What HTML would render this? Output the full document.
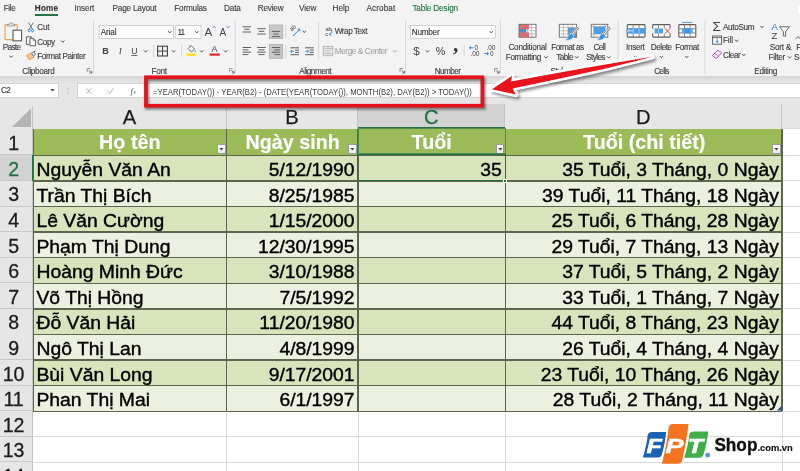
<!DOCTYPE html>
<html lang="vi"><head><meta charset="utf-8"><title>Excel</title>
<style>
html,body{margin:0;padding:0;width:800px;height:471px;overflow:hidden;background:#fff;font-family:"Liberation Sans", sans-serif;}
.abs{position:absolute;}
.t{position:absolute;white-space:nowrap;line-height:12px;}
.cell{position:absolute;white-space:nowrap;overflow:hidden;box-sizing:border-box;}
#root{position:relative;width:800px;height:471px;overflow:hidden;will-change:transform;}
</style></head><body><div id="root">
<!-- ribbon -->
<div class="abs" style="left:0;top:0;width:800px;height:76px;background:#f3f3f3"></div>
<div class="abs" style="left:0;top:75.6px;width:800px;height:8.2px;background:linear-gradient(#d4d4d4,#e2e2e2 55%,#e6e6e6)"></div>
<div class="abs" style="left:0;top:83.6px;width:800px;height:20px;background:#e6e6e6"></div>
<!-- formula bar -->
<div class="abs" style="left:-1px;top:83.1px;width:59.6px;height:14.9px;background:#fff;border:0.7px solid #d4d4d4;box-sizing:border-box"></div>
<div class="abs" style="left:76.8px;top:83.1px;width:725px;height:15.0px;background:#fff;border:0.7px solid #d4d4d4;box-sizing:border-box"></div>
<div class="abs" style="left:0;top:103.5px;width:800px;height:25.3px;background:#e6e6e6"></div>
<!-- home underline -->
<div class="abs" style="left:35.4px;top:14.2px;width:22.6px;height:1.6px;background:#217346"></div>
<div class="abs" style="left:33.2px;top:128.50px;width:748.80px;height:26.85px;background:#9bbb59"></div>
<div class="abs" style="left:33.2px;top:155.35px;width:748.80px;height:25.69px;background:#d8e4bc"></div>
<div class="abs" style="left:33.2px;top:180.94px;width:748.80px;height:25.69px;background:#ebf1de"></div>
<div class="abs" style="left:33.2px;top:206.53px;width:748.80px;height:25.69px;background:#d8e4bc"></div>
<div class="abs" style="left:33.2px;top:232.12px;width:748.80px;height:25.69px;background:#ebf1de"></div>
<div class="abs" style="left:33.2px;top:257.71px;width:748.80px;height:25.69px;background:#d8e4bc"></div>
<div class="abs" style="left:33.2px;top:283.30px;width:748.80px;height:25.69px;background:#ebf1de"></div>
<div class="abs" style="left:33.2px;top:308.89px;width:748.80px;height:25.69px;background:#d8e4bc"></div>
<div class="abs" style="left:33.2px;top:334.48px;width:748.80px;height:25.69px;background:#ebf1de"></div>
<div class="abs" style="left:33.2px;top:360.07px;width:748.80px;height:25.69px;background:#d8e4bc"></div>
<div class="abs" style="left:33.2px;top:385.66px;width:748.80px;height:25.69px;background:#ebf1de"></div>
<div class="abs" style="left:33.2px;top:128.00px;width:766.8px;height:1px;background:#d9d9d9"></div>
<div class="abs" style="left:33.2px;top:154.85px;width:766.8px;height:1px;background:#d9d9d9"></div>
<div class="abs" style="left:33.2px;top:180.44px;width:766.8px;height:1px;background:#d9d9d9"></div>
<div class="abs" style="left:33.2px;top:206.03px;width:766.8px;height:1px;background:#d9d9d9"></div>
<div class="abs" style="left:33.2px;top:231.62px;width:766.8px;height:1px;background:#d9d9d9"></div>
<div class="abs" style="left:33.2px;top:257.21px;width:766.8px;height:1px;background:#d9d9d9"></div>
<div class="abs" style="left:33.2px;top:282.80px;width:766.8px;height:1px;background:#d9d9d9"></div>
<div class="abs" style="left:33.2px;top:308.39px;width:766.8px;height:1px;background:#d9d9d9"></div>
<div class="abs" style="left:33.2px;top:333.98px;width:766.8px;height:1px;background:#d9d9d9"></div>
<div class="abs" style="left:33.2px;top:359.57px;width:766.8px;height:1px;background:#d9d9d9"></div>
<div class="abs" style="left:33.2px;top:385.16px;width:766.8px;height:1px;background:#d9d9d9"></div>
<div class="abs" style="left:33.2px;top:410.75px;width:766.8px;height:1px;background:#d9d9d9"></div>
<div class="abs" style="left:33.2px;top:436.34px;width:766.8px;height:1px;background:#d9d9d9"></div>
<div class="abs" style="left:33.2px;top:461.93px;width:766.8px;height:1px;background:#d9d9d9"></div>
<div class="abs" style="left:33.2px;top:487.52px;width:766.8px;height:1px;background:#d9d9d9"></div>
<div class="abs" style="left:226.30px;top:128.50px;width:1px;height:342.50px;background:#d9d9d9"></div>
<div class="abs" style="left:357.60px;top:128.50px;width:1px;height:342.50px;background:#d9d9d9"></div>
<div class="abs" style="left:505.00px;top:128.50px;width:1px;height:342.50px;background:#d9d9d9"></div>
<div class="abs" style="left:781.50px;top:128.50px;width:1px;height:342.50px;background:#d9d9d9"></div>
<div class="abs" style="left:33.2px;top:127.80px;width:748.80px;height:1.4px;background:#5f644f"></div>
<div class="abs" style="left:33.2px;top:154.65px;width:748.80px;height:1.4px;background:#5f644f"></div>
<div class="abs" style="left:33.2px;top:180.24px;width:748.80px;height:1.4px;background:#5f644f"></div>
<div class="abs" style="left:33.2px;top:205.83px;width:748.80px;height:1.4px;background:#5f644f"></div>
<div class="abs" style="left:33.2px;top:231.42px;width:748.80px;height:1.4px;background:#5f644f"></div>
<div class="abs" style="left:33.2px;top:257.01px;width:748.80px;height:1.4px;background:#5f644f"></div>
<div class="abs" style="left:33.2px;top:282.60px;width:748.80px;height:1.4px;background:#5f644f"></div>
<div class="abs" style="left:33.2px;top:308.19px;width:748.80px;height:1.4px;background:#5f644f"></div>
<div class="abs" style="left:33.2px;top:333.78px;width:748.80px;height:1.4px;background:#5f644f"></div>
<div class="abs" style="left:33.2px;top:359.37px;width:748.80px;height:1.4px;background:#5f644f"></div>
<div class="abs" style="left:33.2px;top:384.96px;width:748.80px;height:1.4px;background:#5f644f"></div>
<div class="abs" style="left:33.2px;top:410.55px;width:748.80px;height:1.4px;background:#5f644f"></div>
<div class="abs" style="left:32.50px;top:128.50px;width:1.4px;height:282.75px;background:#5f644f"></div>
<div class="abs" style="left:226.10px;top:128.50px;width:1.4px;height:282.75px;background:#5f644f"></div>
<div class="abs" style="left:357.40px;top:128.50px;width:1.4px;height:282.75px;background:#5f644f"></div>
<div class="abs" style="left:504.80px;top:128.50px;width:1.4px;height:282.75px;background:#5f644f"></div>
<div class="abs" style="left:781.30px;top:128.50px;width:1.4px;height:282.75px;background:#5f644f"></div>
<div class="cell" style="left:33.2px;top:128.50px;width:193.60px;height:26.85px;line-height:28.05px;text-align:center;color:#fff;font-weight:700;font-size:19.299999999999997px;-webkit-text-stroke:0.15px;transform:scaleX(1.023);transform-origin:50% 50%">Họ tên</div>
<div class="abs" style="left:216.80px;top:144.45px;width:8.8px;height:9.6px;background:linear-gradient(#fff,#e8e8e8);border:0.7px solid #9a9a9a;box-sizing:border-box"></div>
<svg class="abs" style="left:216.80px;top:144.45px" width="8.8" height="9.6" viewBox="0 0 8.8 9.6"><path d="M2.3 4 L6.5 4 L4.4 6.5 Z" fill="#444"/></svg>
<div class="cell" style="left:226.8px;top:128.50px;width:131.30px;height:26.85px;line-height:28.05px;text-align:center;color:#fff;font-weight:700;font-size:19.299999999999997px;-webkit-text-stroke:0.15px;transform:scaleX(1.023);transform-origin:50% 50%">Ngày sinh</div>
<div class="abs" style="left:348.10px;top:144.45px;width:8.8px;height:9.6px;background:linear-gradient(#fff,#e8e8e8);border:0.7px solid #9a9a9a;box-sizing:border-box"></div>
<svg class="abs" style="left:348.10px;top:144.45px" width="8.8" height="9.6" viewBox="0 0 8.8 9.6"><path d="M2.3 4 L6.5 4 L4.4 6.5 Z" fill="#444"/></svg>
<div class="cell" style="left:358.1px;top:128.50px;width:147.40px;height:26.85px;line-height:28.05px;text-align:center;color:#fff;font-weight:700;font-size:19.299999999999997px;-webkit-text-stroke:0.15px;transform:scaleX(1.023);transform-origin:50% 50%">Tuổi</div>
<div class="abs" style="left:495.50px;top:144.45px;width:8.8px;height:9.6px;background:linear-gradient(#fff,#e8e8e8);border:0.7px solid #9a9a9a;box-sizing:border-box"></div>
<svg class="abs" style="left:495.50px;top:144.45px" width="8.8" height="9.6" viewBox="0 0 8.8 9.6"><path d="M2.3 4 L6.5 4 L4.4 6.5 Z" fill="#444"/></svg>
<div class="cell" style="left:505.5px;top:128.50px;width:276.50px;height:26.85px;line-height:28.05px;text-align:center;color:#fff;font-weight:700;font-size:19.299999999999997px;-webkit-text-stroke:0.15px;transform:scaleX(1.023);transform-origin:50% 50%">Tuổi (chi tiết)</div>
<div class="abs" style="left:772.00px;top:144.45px;width:8.8px;height:9.6px;background:linear-gradient(#fff,#e8e8e8);border:0.7px solid #9a9a9a;box-sizing:border-box"></div>
<svg class="abs" style="left:772.00px;top:144.45px" width="8.8" height="9.6" viewBox="0 0 8.8 9.6"><path d="M2.3 4 L6.5 4 L4.4 6.5 Z" fill="#444"/></svg>
<div class="cell" style="left:33.2px;top:155px;width:193.60px;height:29px;line-height:29px;text-align:left;padding-left:3.4px;font-size:18.9px;color:#000;-webkit-text-stroke:0.4px;transform:scaleX(1.023);transform-origin:0 50%">Nguyễn Văn An</div>
<div class="cell" style="left:226.8px;top:155px;width:131.30px;height:29px;line-height:29px;text-align:right;padding-right:3.6px;font-size:18.9px;color:#000;-webkit-text-stroke:0.4px;transform:scaleX(1.023);transform-origin:100% 50%">5/12/1990</div>
<div class="cell" style="left:358.1px;top:155px;width:147.40px;height:29px;line-height:29px;text-align:right;padding-right:3.6px;font-size:18.9px;color:#000;-webkit-text-stroke:0.4px;transform:scaleX(1.023);transform-origin:100% 50%">35</div>
<div class="cell" style="left:505.5px;top:155px;width:276.50px;height:29px;line-height:29px;text-align:right;padding-right:3.6px;font-size:18.9px;color:#000;-webkit-text-stroke:0.4px;transform:scaleX(1.023);transform-origin:100% 50%">35 Tuổi, 3 Tháng, 0 Ngày</div>
<div class="cell" style="left:33.2px;top:181px;width:193.60px;height:29px;line-height:29px;text-align:left;padding-left:3.4px;font-size:18.9px;color:#000;-webkit-text-stroke:0.4px;transform:scaleX(1.023);transform-origin:0 50%">Trần Thị Bích</div>
<div class="cell" style="left:226.8px;top:181px;width:131.30px;height:29px;line-height:29px;text-align:right;padding-right:3.6px;font-size:18.9px;color:#000;-webkit-text-stroke:0.4px;transform:scaleX(1.023);transform-origin:100% 50%">8/25/1985</div>
<div class="cell" style="left:505.5px;top:181px;width:276.50px;height:29px;line-height:29px;text-align:right;padding-right:3.6px;font-size:18.9px;color:#000;-webkit-text-stroke:0.4px;transform:scaleX(1.023);transform-origin:100% 50%">39 Tuổi, 11 Tháng, 18 Ngày</div>
<div class="cell" style="left:33.2px;top:206px;width:193.60px;height:29px;line-height:29px;text-align:left;padding-left:3.4px;font-size:18.9px;color:#000;-webkit-text-stroke:0.4px;transform:scaleX(1.023);transform-origin:0 50%">Lê Văn Cường</div>
<div class="cell" style="left:226.8px;top:206px;width:131.30px;height:29px;line-height:29px;text-align:right;padding-right:3.6px;font-size:18.9px;color:#000;-webkit-text-stroke:0.4px;transform:scaleX(1.023);transform-origin:100% 50%">1/15/2000</div>
<div class="cell" style="left:505.5px;top:206px;width:276.50px;height:29px;line-height:29px;text-align:right;padding-right:3.6px;font-size:18.9px;color:#000;-webkit-text-stroke:0.4px;transform:scaleX(1.023);transform-origin:100% 50%">25 Tuổi, 6 Tháng, 28 Ngày</div>
<div class="cell" style="left:33.2px;top:232px;width:193.60px;height:29px;line-height:29px;text-align:left;padding-left:3.4px;font-size:18.9px;color:#000;-webkit-text-stroke:0.4px;transform:scaleX(1.023);transform-origin:0 50%">Phạm Thị Dung</div>
<div class="cell" style="left:226.8px;top:232px;width:131.30px;height:29px;line-height:29px;text-align:right;padding-right:3.6px;font-size:18.9px;color:#000;-webkit-text-stroke:0.4px;transform:scaleX(1.023);transform-origin:100% 50%">12/30/1995</div>
<div class="cell" style="left:505.5px;top:232px;width:276.50px;height:29px;line-height:29px;text-align:right;padding-right:3.6px;font-size:18.9px;color:#000;-webkit-text-stroke:0.4px;transform:scaleX(1.023);transform-origin:100% 50%">29 Tuổi, 7 Tháng, 13 Ngày</div>
<div class="cell" style="left:33.2px;top:257px;width:193.60px;height:29px;line-height:29px;text-align:left;padding-left:3.4px;font-size:18.9px;color:#000;-webkit-text-stroke:0.4px;transform:scaleX(1.023);transform-origin:0 50%">Hoàng Minh Đức</div>
<div class="cell" style="left:226.8px;top:257px;width:131.30px;height:29px;line-height:29px;text-align:right;padding-right:3.6px;font-size:18.9px;color:#000;-webkit-text-stroke:0.4px;transform:scaleX(1.023);transform-origin:100% 50%">3/10/1988</div>
<div class="cell" style="left:505.5px;top:257px;width:276.50px;height:29px;line-height:29px;text-align:right;padding-right:3.6px;font-size:18.9px;color:#000;-webkit-text-stroke:0.4px;transform:scaleX(1.023);transform-origin:100% 50%">37 Tuổi, 5 Tháng, 2 Ngày</div>
<div class="cell" style="left:33.2px;top:283px;width:193.60px;height:29px;line-height:29px;text-align:left;padding-left:3.4px;font-size:18.9px;color:#000;-webkit-text-stroke:0.4px;transform:scaleX(1.023);transform-origin:0 50%">Võ Thị Hồng</div>
<div class="cell" style="left:226.8px;top:283px;width:131.30px;height:29px;line-height:29px;text-align:right;padding-right:3.6px;font-size:18.9px;color:#000;-webkit-text-stroke:0.4px;transform:scaleX(1.023);transform-origin:100% 50%">7/5/1992</div>
<div class="cell" style="left:505.5px;top:283px;width:276.50px;height:29px;line-height:29px;text-align:right;padding-right:3.6px;font-size:18.9px;color:#000;-webkit-text-stroke:0.4px;transform:scaleX(1.023);transform-origin:100% 50%">33 Tuổi, 1 Tháng, 7 Ngày</div>
<div class="cell" style="left:33.2px;top:308px;width:193.60px;height:29px;line-height:29px;text-align:left;padding-left:3.4px;font-size:18.9px;color:#000;-webkit-text-stroke:0.4px;transform:scaleX(1.023);transform-origin:0 50%">Đỗ Văn Hải</div>
<div class="cell" style="left:226.8px;top:308px;width:131.30px;height:29px;line-height:29px;text-align:right;padding-right:3.6px;font-size:18.9px;color:#000;-webkit-text-stroke:0.4px;transform:scaleX(1.023);transform-origin:100% 50%">11/20/1980</div>
<div class="cell" style="left:505.5px;top:308px;width:276.50px;height:29px;line-height:29px;text-align:right;padding-right:3.6px;font-size:18.9px;color:#000;-webkit-text-stroke:0.4px;transform:scaleX(1.023);transform-origin:100% 50%">44 Tuổi, 8 Tháng, 23 Ngày</div>
<div class="cell" style="left:33.2px;top:334px;width:193.60px;height:29px;line-height:29px;text-align:left;padding-left:3.4px;font-size:18.9px;color:#000;-webkit-text-stroke:0.4px;transform:scaleX(1.023);transform-origin:0 50%">Ngô Thị Lan</div>
<div class="cell" style="left:226.8px;top:334px;width:131.30px;height:29px;line-height:29px;text-align:right;padding-right:3.6px;font-size:18.9px;color:#000;-webkit-text-stroke:0.4px;transform:scaleX(1.023);transform-origin:100% 50%">4/8/1999</div>
<div class="cell" style="left:505.5px;top:334px;width:276.50px;height:29px;line-height:29px;text-align:right;padding-right:3.6px;font-size:18.9px;color:#000;-webkit-text-stroke:0.4px;transform:scaleX(1.023);transform-origin:100% 50%">26 Tuổi, 4 Tháng, 4 Ngày</div>
<div class="cell" style="left:33.2px;top:360px;width:193.60px;height:29px;line-height:29px;text-align:left;padding-left:3.4px;font-size:18.9px;color:#000;-webkit-text-stroke:0.4px;transform:scaleX(1.023);transform-origin:0 50%">Bùi Văn Long</div>
<div class="cell" style="left:226.8px;top:360px;width:131.30px;height:29px;line-height:29px;text-align:right;padding-right:3.6px;font-size:18.9px;color:#000;-webkit-text-stroke:0.4px;transform:scaleX(1.023);transform-origin:100% 50%">9/17/2001</div>
<div class="cell" style="left:505.5px;top:360px;width:276.50px;height:29px;line-height:29px;text-align:right;padding-right:3.6px;font-size:18.9px;color:#000;-webkit-text-stroke:0.4px;transform:scaleX(1.023);transform-origin:100% 50%">23 Tuổi, 10 Tháng, 26 Ngày</div>
<div class="cell" style="left:33.2px;top:385px;width:193.60px;height:29px;line-height:29px;text-align:left;padding-left:3.4px;font-size:18.9px;color:#000;-webkit-text-stroke:0.4px;transform:scaleX(1.023);transform-origin:0 50%">Phan Thị Mai</div>
<div class="cell" style="left:226.8px;top:385px;width:131.30px;height:29px;line-height:29px;text-align:right;padding-right:3.6px;font-size:18.9px;color:#000;-webkit-text-stroke:0.4px;transform:scaleX(1.023);transform-origin:100% 50%">6/1/1997</div>
<div class="cell" style="left:505.5px;top:385px;width:276.50px;height:29px;line-height:29px;text-align:right;padding-right:3.6px;font-size:18.9px;color:#000;-webkit-text-stroke:0.4px;transform:scaleX(1.023);transform-origin:100% 50%">28 Tuổi, 2 Tháng, 11 Ngày</div>
<div class="abs" style="left:0;top:128.50px;width:33.2px;height:26.90px;background:#e6e6e6;border-bottom:1px solid #c9c9c9;box-sizing:border-box"></div>
<div class="cell" style="left:0;top:128px;width:27.200000000000003px;height:29px;line-height:29px;text-align:center;color:#1c1c1c;font-size:20.6px;-webkit-text-stroke:0.3px;transform:scaleX(0.95)">1</div>
<div class="abs" style="left:0;top:155.35px;width:33.2px;height:25.64px;background:#d2d2d2;border-bottom:1px solid #c9c9c9;box-sizing:border-box"></div>
<div class="cell" style="left:0;top:154px;width:27.200000000000003px;height:29px;line-height:29px;text-align:center;color:#217346;font-size:20.6px;-webkit-text-stroke:0.3px;transform:scaleX(0.95)">2</div>
<div class="abs" style="left:0;top:180.94px;width:33.2px;height:25.64px;background:#e6e6e6;border-bottom:1px solid #c9c9c9;box-sizing:border-box"></div>
<div class="cell" style="left:0;top:179px;width:27.200000000000003px;height:29px;line-height:29px;text-align:center;color:#1c1c1c;font-size:20.6px;-webkit-text-stroke:0.3px;transform:scaleX(0.95)">3</div>
<div class="abs" style="left:0;top:206.53px;width:33.2px;height:25.64px;background:#e6e6e6;border-bottom:1px solid #c9c9c9;box-sizing:border-box"></div>
<div class="cell" style="left:0;top:205px;width:27.200000000000003px;height:29px;line-height:29px;text-align:center;color:#1c1c1c;font-size:20.6px;-webkit-text-stroke:0.3px;transform:scaleX(0.95)">4</div>
<div class="abs" style="left:0;top:232.12px;width:33.2px;height:25.64px;background:#e6e6e6;border-bottom:1px solid #c9c9c9;box-sizing:border-box"></div>
<div class="cell" style="left:0;top:231px;width:27.200000000000003px;height:29px;line-height:29px;text-align:center;color:#1c1c1c;font-size:20.6px;-webkit-text-stroke:0.3px;transform:scaleX(0.95)">5</div>
<div class="abs" style="left:0;top:257.71px;width:33.2px;height:25.64px;background:#e6e6e6;border-bottom:1px solid #c9c9c9;box-sizing:border-box"></div>
<div class="cell" style="left:0;top:256px;width:27.200000000000003px;height:29px;line-height:29px;text-align:center;color:#1c1c1c;font-size:20.6px;-webkit-text-stroke:0.3px;transform:scaleX(0.95)">6</div>
<div class="abs" style="left:0;top:283.30px;width:33.2px;height:25.64px;background:#e6e6e6;border-bottom:1px solid #c9c9c9;box-sizing:border-box"></div>
<div class="cell" style="left:0;top:282px;width:27.200000000000003px;height:29px;line-height:29px;text-align:center;color:#1c1c1c;font-size:20.6px;-webkit-text-stroke:0.3px;transform:scaleX(0.95)">7</div>
<div class="abs" style="left:0;top:308.89px;width:33.2px;height:25.64px;background:#e6e6e6;border-bottom:1px solid #c9c9c9;box-sizing:border-box"></div>
<div class="cell" style="left:0;top:307px;width:27.200000000000003px;height:29px;line-height:29px;text-align:center;color:#1c1c1c;font-size:20.6px;-webkit-text-stroke:0.3px;transform:scaleX(0.95)">8</div>
<div class="abs" style="left:0;top:334.48px;width:33.2px;height:25.64px;background:#e6e6e6;border-bottom:1px solid #c9c9c9;box-sizing:border-box"></div>
<div class="cell" style="left:0;top:333px;width:27.200000000000003px;height:29px;line-height:29px;text-align:center;color:#1c1c1c;font-size:20.6px;-webkit-text-stroke:0.3px;transform:scaleX(0.95)">9</div>
<div class="abs" style="left:0;top:360.07px;width:33.2px;height:25.64px;background:#e6e6e6;border-bottom:1px solid #c9c9c9;box-sizing:border-box"></div>
<div class="cell" style="left:0;top:359px;width:27.200000000000003px;height:29px;line-height:29px;text-align:center;color:#1c1c1c;font-size:20.6px;-webkit-text-stroke:0.3px;transform:scaleX(0.95)">10</div>
<div class="abs" style="left:0;top:385.66px;width:33.2px;height:25.64px;background:#e6e6e6;border-bottom:1px solid #c9c9c9;box-sizing:border-box"></div>
<div class="cell" style="left:0;top:384px;width:27.200000000000003px;height:29px;line-height:29px;text-align:center;color:#1c1c1c;font-size:20.6px;-webkit-text-stroke:0.3px;transform:scaleX(0.95)">11</div>
<div class="abs" style="left:0;top:411.25px;width:33.2px;height:25.64px;background:#e6e6e6;border-bottom:1px solid #c9c9c9;box-sizing:border-box"></div>
<div class="cell" style="left:0;top:410px;width:27.200000000000003px;height:29px;line-height:29px;text-align:center;color:#1c1c1c;font-size:20.6px;-webkit-text-stroke:0.3px;transform:scaleX(0.95)">12</div>
<div class="abs" style="left:0;top:436.84px;width:33.2px;height:25.64px;background:#e6e6e6;border-bottom:1px solid #c9c9c9;box-sizing:border-box"></div>
<div class="cell" style="left:0;top:435px;width:27.200000000000003px;height:29px;line-height:29px;text-align:center;color:#1c1c1c;font-size:20.6px;-webkit-text-stroke:0.3px;transform:scaleX(0.95)">13</div>
<div class="abs" style="left:0;top:462.43px;width:33.2px;height:25.64px;background:#e6e6e6;border-bottom:1px solid #c9c9c9;box-sizing:border-box"></div>
<div class="cell" style="left:0;top:461px;width:27.200000000000003px;height:29px;line-height:29px;text-align:center;color:#1c1c1c;font-size:20.6px;-webkit-text-stroke:0.3px;transform:scaleX(0.95)">14</div>
<div class="abs" style="left:32.2px;top:128.50px;width:1px;height:342.50px;background:#c4c4c4"></div>
<div class="abs" style="left:31.700000000000003px;top:155.35px;width:1.5px;height:25.59px;background:#217346"></div>
<div class="cell" style="left:33.2px;top:103.5px;width:193.60px;height:25.00px;line-height:27.00px;text-align:center;background:#e6e6e6;color:#1c1c1c;font-size:20.2px;-webkit-text-stroke:0.25px;border-right:1px solid #c4c4c4;box-sizing:border-box">A</div>
<div class="cell" style="left:226.8px;top:103.5px;width:131.30px;height:25.00px;line-height:27.00px;text-align:center;background:#e6e6e6;color:#1c1c1c;font-size:20.2px;-webkit-text-stroke:0.25px;border-right:1px solid #c4c4c4;box-sizing:border-box">B</div>
<div class="cell" style="left:358.1px;top:103.5px;width:147.40px;height:25.00px;line-height:27.00px;text-align:center;background:#d2d2d2;color:#217346;font-size:20.2px;-webkit-text-stroke:0.25px;border-right:1px solid #c4c4c4;box-sizing:border-box">C</div>
<div class="cell" style="left:505.5px;top:103.5px;width:276.50px;height:25.00px;line-height:27.00px;text-align:center;background:#e6e6e6;color:#1c1c1c;font-size:20.2px;-webkit-text-stroke:0.25px;border-right:1px solid #c4c4c4;box-sizing:border-box">D</div>
<div class="abs" style="left:358.1px;top:127.00px;width:147.40px;height:1.5px;background:#217346"></div>
<svg class="abs" style="left:0;top:103.5px" width="33.2" height="25.00" viewBox="0 0 33.2 25.00"><path d="M31 4.5 L31 23 L12 23 Z" fill="#b4b4b4"/></svg>
<div class="abs" style="left:32.2px;top:105.5px;width:1px;height:23.00px;background:#c4c4c4"></div>
<div class="abs" style="left:357.10px;top:154.35px;width:148.90px;height:27.09px;border:1.6px solid #217346;box-sizing:border-box"></div>
<div class="abs" style="left:357.60px;top:128.00px;width:148.40px;height:26.09px;border:1px solid #4f8a4f;box-sizing:border-box"></div>
<div class="abs" style="left:503.30px;top:178.74px;width:4px;height:4px;background:#217346;border:0.6px solid #fff;box-sizing:border-box"></div>
<svg class="abs" style="left:777.00px;top:406.25px" width="5" height="5" viewBox="0 0 5 5"><path d="M4.4 0 L4.4 4.4 L0 4.4 Z" fill="#27479a"/></svg>
<svg class="abs" style="left:0;top:0" width="800" height="471" viewBox="0 0 800 471" font-family="Liberation Sans, sans-serif">
<path d="M93.5 20.5 L93.5 73.5" stroke="#d2d2d2" stroke-width="0.9"/>
<path d="M235.2 20.5 L235.2 73.5" stroke="#d2d2d2" stroke-width="0.9"/>
<path d="M405.6 20.5 L405.6 73.5" stroke="#d2d2d2" stroke-width="0.9"/>
<path d="M500.4 20.5 L500.4 73.5" stroke="#d2d2d2" stroke-width="0.9"/>
<path d="M618 20.5 L618 73.5" stroke="#d2d2d2" stroke-width="0.9"/>
<path d="M705 20.5 L705 73.5" stroke="#d2d2d2" stroke-width="0.9"/>
<path d="M318.6 22 L318.6 60" stroke="#d2d2d2" stroke-width="0.9"/>
<path d="M285.8 25 L285.8 38.5" stroke="#d2d2d2" stroke-width="0.9"/>
<path d="M285.8 44.5 L285.8 58.3" stroke="#d2d2d2" stroke-width="0.9"/>
<path d="M153.6 45 L153.6 57" stroke="#d2d2d2" stroke-width="0.9"/>
<path d="M181.6 45 L181.6 57" stroke="#d2d2d2" stroke-width="0.9"/>
<path d="M464.2 45 L464.2 57" stroke="#d2d2d2" stroke-width="0.9"/>
<path d="M87.2 71.8 L87.2 68.6 L90.4 68.6" fill="none" stroke="#777" stroke-width="0.8"/>
<path d="M88.8 70.19999999999999 L91.60000000000001 73.0 M91.7 70.8 L91.7 73.1 L89.4 73.1" fill="none" stroke="#666" stroke-width="0.9"/>
<path d="M229.6 71.8 L229.6 68.6 L232.79999999999998 68.6" fill="none" stroke="#777" stroke-width="0.8"/>
<path d="M231.2 70.19999999999999 L234.0 73.0 M234.1 70.8 L234.1 73.1 L231.79999999999998 73.1" fill="none" stroke="#666" stroke-width="0.9"/>
<path d="M400 71.8 L400 68.6 L403.2 68.6" fill="none" stroke="#777" stroke-width="0.8"/>
<path d="M401.6 70.19999999999999 L404.4 73.0 M404.5 70.8 L404.5 73.1 L402.2 73.1" fill="none" stroke="#666" stroke-width="0.9"/>
<path d="M494.6 71.8 L494.6 68.6 L497.8 68.6" fill="none" stroke="#777" stroke-width="0.8"/>
<path d="M496.20000000000005 70.19999999999999 L499.0 73.0 M499.1 70.8 L499.1 73.1 L496.8 73.1" fill="none" stroke="#666" stroke-width="0.9"/>
<rect x="5" y="24.6" width="12.2" height="15" rx="0.8" fill="#f6f4f1" stroke="#eda04f" stroke-width="1.1"/>
<path d="M7.6 26 L7.6 24.4 L9.4 24.2 L11.1 22.2 L12.8 24.2 L14.6 24.4 L14.6 26 Z" fill="#e4e4e4" stroke="#8c8c8c" stroke-width="0.8" stroke-linejoin="round"/>
<rect x="13" y="30.2" width="8.6" height="10.6" fill="#fdfdfd" stroke="#5a5a5a" stroke-width="1.1"/>
<path d="M9.75 55.95 L11.10 57.45 L12.45 55.95" fill="none" stroke="#4a4a4a" stroke-width="0.95" stroke-linecap="round" stroke-linejoin="round"/>
<path d="M28.6 22.7 L32.4 29.2 M33.2 22.7 L29.4 29.2" stroke="#6a6a6a" stroke-width="0.9" fill="none"/>
<ellipse cx="29.2" cy="30.5" rx="1.05" ry="1.3" fill="none" stroke="#2f7fd2" stroke-width="0.9"/><ellipse cx="32.6" cy="30.5" rx="1.05" ry="1.3" fill="none" stroke="#2f7fd2" stroke-width="0.9"/>
<path d="M29.2 44.4 L26.4 44.4 L26.4 36.8 L31.3 36.8 L31.3 38" fill="none" stroke="#5a5a5a" stroke-width="0.95"/>
<path d="M29.9 38.4 L33.6 38.4 L35.6 40.4 L35.6 45.8 L29.9 45.8 Z" fill="#f8f8f8" stroke="#5a5a5a" stroke-width="0.95"/>
<path d="M33.4 38.6 L33.4 40.6 L35.4 40.6" fill="none" stroke="#5a5a5a" stroke-width="0.7"/>
<path d="M61.45 40.85 L62.80 42.35 L64.15 40.85" fill="none" stroke="#4a4a4a" stroke-width="0.95" stroke-linecap="round" stroke-linejoin="round"/>
<path d="M26.3 55.6 L31.2 53 L34 57.2 L29.4 59.8 Z" fill="#f6c88f" stroke="#e8953a" stroke-width="0.9" stroke-linejoin="round"/>
<path d="M31.4 53.2 L33.6 51.4 L35.6 54.2 L33.6 56.2 Z" fill="#ddd" stroke="#666" stroke-width="0.8" stroke-linejoin="round"/>
<path d="M34 52 L35.6 50.8" stroke="#666" stroke-width="0.9"/>
<rect x="99.2" y="25.5" width="74.3" height="13" fill="#fff" stroke="#c6c6c6" stroke-width="0.8"/>
<rect x="175.8" y="25.5" width="25.2" height="13" fill="#fff" stroke="#c6c6c6" stroke-width="0.8"/>
<path d="M168.45 31.45 L169.80 32.95 L171.15 31.45" fill="none" stroke="#4a4a4a" stroke-width="0.95" stroke-linecap="round" stroke-linejoin="round"/>
<path d="M195.45 31.45 L196.80 32.95 L198.15 31.45" fill="none" stroke="#4a4a4a" stroke-width="0.95" stroke-linecap="round" stroke-linejoin="round"/>
<text x="204.6" y="36.2" font-size="11.5" fill="#444">A</text>
<text x="219.6" y="36.2" font-size="10" fill="#444">A</text>
<path d="M212.90 27.65 L214.20 26.15 L215.50 27.65" fill="none" stroke="#2f7fd2" stroke-width="0.8" stroke-linecap="round" stroke-linejoin="round"/>
<path d="M226.90 26.45 L228.20 27.95 L229.50 26.45" fill="none" stroke="#2f7fd2" stroke-width="0.8" stroke-linecap="round" stroke-linejoin="round"/>
<text x="105.6" y="54.4" font-size="9.2" font-weight="700" fill="#444" text-anchor="middle">B</text>
<text x="120.2" y="54.4" font-size="9.2" font-style="italic" font-family="Liberation Serif, serif" fill="#444" text-anchor="middle">I</text>
<text x="134.4" y="53.8" font-size="8.8" fill="#444" text-anchor="middle">U</text>
<path d="M131.40 55.50 L137.40 55.50" stroke="#444" stroke-width="0.8"/>
<path d="M144.25 50.65 L145.60 52.15 L146.95 50.65" fill="none" stroke="#4a4a4a" stroke-width="0.95" stroke-linecap="round" stroke-linejoin="round"/>
<rect x="157.6" y="46.2" width="9.8" height="9.8" fill="none" stroke="#444" stroke-width="1.1"/><path d="M162.5 46.2 L162.5 56 M157.6 51.1 L167.4 51.1" stroke="#444" stroke-width="1"/>
<path d="M172.25 50.65 L173.60 52.15 L174.95 50.65" fill="none" stroke="#4a4a4a" stroke-width="0.95" stroke-linecap="round" stroke-linejoin="round"/>
<path d="M188.2 48.6 L191.2 45.6 L194.6 49 L191.4 52 Z" fill="#fafafa" stroke="#555" stroke-width="0.85" stroke-linejoin="round"/>
<path d="M190.2 46.6 L189.4 45.4" stroke="#555" stroke-width="0.8"/>
<path d="M195 49.4 Q196.4 51.4 195.2 52 Q194 51.6 195 49.4 Z" fill="#2f7fd2"/>
<rect x="186" y="53.5" width="10.2" height="2.2" fill="#ffe61a"/>
<path d="M200.25 50.65 L201.60 52.15 L202.95 50.65" fill="none" stroke="#4a4a4a" stroke-width="0.95" stroke-linecap="round" stroke-linejoin="round"/>
<text x="214.5" y="52.2" font-size="9" fill="#444" text-anchor="middle">A</text>
<rect x="209.6" y="53.5" width="10.2" height="2.2" fill="#e8212e"/>
<path d="M224.25 50.65 L225.60 52.15 L226.95 50.65" fill="none" stroke="#4a4a4a" stroke-width="0.95" stroke-linecap="round" stroke-linejoin="round"/>
<rect x="269.3" y="25" width="13.4" height="13.6" fill="#c9c9c9" stroke="#a6a6a6" stroke-width="0.7"/>
<rect x="269.3" y="44.5" width="13.4" height="13.8" fill="#c9c9c9" stroke="#a6a6a6" stroke-width="0.7"/>
<path d="M242.60 26.80 L251.00 26.80" stroke="#5a5a5a" stroke-width="0.95"/>
<path d="M244.10 29.30 L249.50 29.30" stroke="#5a5a5a" stroke-width="0.95"/>
<path d="M242.60 32.00 L251.00 32.00" stroke="#5a5a5a" stroke-width="0.95"/>
<path d="M257.20 28.70 L265.80 28.70" stroke="#5a5a5a" stroke-width="0.95"/>
<path d="M258.70 31.30 L264.30 31.30" stroke="#5a5a5a" stroke-width="0.95"/>
<path d="M257.20 34.00 L265.80 34.00" stroke="#5a5a5a" stroke-width="0.95"/>
<path d="M271.80 31.40 L280.20 31.40" stroke="#5a5a5a" stroke-width="0.95"/>
<path d="M273.30 34.00 L278.70 34.00" stroke="#5a5a5a" stroke-width="0.95"/>
<path d="M271.80 36.60 L280.20 36.60" stroke="#5a5a5a" stroke-width="0.95"/>
<path d="M242.60 47.50 L251.00 47.50" stroke="#5a5a5a" stroke-width="0.95"/>
<path d="M242.60 49.90 L248.40 49.90" stroke="#5a5a5a" stroke-width="0.95"/>
<path d="M242.60 52.20 L251.00 52.20" stroke="#5a5a5a" stroke-width="0.95"/>
<path d="M242.60 54.60 L248.40 54.60" stroke="#5a5a5a" stroke-width="0.95"/>
<path d="M257.20 47.50 L265.80 47.50" stroke="#5a5a5a" stroke-width="0.95"/>
<path d="M258.50 49.90 L264.50 49.90" stroke="#5a5a5a" stroke-width="0.95"/>
<path d="M257.20 52.20 L265.80 52.20" stroke="#5a5a5a" stroke-width="0.95"/>
<path d="M258.50 54.60 L264.50 54.60" stroke="#5a5a5a" stroke-width="0.95"/>
<path d="M271.80 47.50 L280.20 47.50" stroke="#5a5a5a" stroke-width="0.95"/>
<path d="M274.40 49.90 L280.20 49.90" stroke="#5a5a5a" stroke-width="0.95"/>
<path d="M271.80 52.20 L280.20 52.20" stroke="#5a5a5a" stroke-width="0.95"/>
<path d="M274.40 54.60 L280.20 54.60" stroke="#5a5a5a" stroke-width="0.95"/>
<text transform="translate(291.4 31.6) rotate(-40)" font-size="6.2" fill="#3a3a3a">ab</text>
<path d="M292.8 36 L299.6 29.4" stroke="#2f7fd2" stroke-width="0.95"/><path d="M297.6 29.2 L299.9 29.1 L299.8 31.4" fill="none" stroke="#2f7fd2" stroke-width="0.9"/>
<path d="M302.95 31.05 L304.30 32.55 L305.65 31.05" fill="none" stroke="#4a4a4a" stroke-width="0.95" stroke-linecap="round" stroke-linejoin="round"/>
<path d="M290.40 47.80 L299.00 47.80" stroke="#555" stroke-width="0.95"/>
<path d="M290.40 54.70 L299.00 54.70" stroke="#555" stroke-width="0.95"/>
<path d="M295.00 50.10 L299.00 50.10" stroke="#555" stroke-width="0.95"/>
<path d="M295.00 52.40 L299.00 52.40" stroke="#555" stroke-width="0.95"/>
<path d="M294.0 51.25 L290.7 51.25 M292.0 49.9 L290.59999999999997 51.25 L292.0 52.6" fill="none" stroke="#2f7fd2" stroke-width="0.95"/>
<path d="M305.10 47.80 L313.80 47.80" stroke="#555" stroke-width="0.95"/>
<path d="M305.10 54.70 L313.80 54.70" stroke="#555" stroke-width="0.95"/>
<path d="M309.70 50.10 L313.80 50.10" stroke="#555" stroke-width="0.95"/>
<path d="M309.70 52.40 L313.80 52.40" stroke="#555" stroke-width="0.95"/>
<path d="M305.3 51.25 L308.70000000000005 51.25 M307.3 49.9 L308.70000000000005 51.25 L307.3 52.6" fill="none" stroke="#2f7fd2" stroke-width="0.95"/>
<text x="325.4" y="31.2" font-size="5.8" fill="#444">ab</text>
<text x="325.2" y="36" font-size="5.8" fill="#444">c</text>
<path d="M331 29.2 Q333.4 32.6 329.6 34.6" fill="none" stroke="#2f7fd2" stroke-width="0.95"/><path d="M331.3 35.2 L329.3 34.8 L329.9 32.9" fill="none" stroke="#2f7fd2" stroke-width="0.85"/>
<rect x="323.3" y="46.3" width="9.5" height="9.4" fill="#ececec" stroke="#b4b4b4" stroke-width="0.9"/><path d="M323.3 48.6 L332.8 48.6 M323.3 53.4 L332.8 53.4 M328 46.3 L328 48.6 M328 53.4 L328 55.7 M325 51 L331 51" stroke="#b4b4b4" stroke-width="0.8" fill="none"/>
<path d="M393.35 50.65 L394.70 52.15 L396.05 50.65" fill="none" stroke="#a0a0a0" stroke-width="0.95" stroke-linecap="round" stroke-linejoin="round"/>
<rect x="410.5" y="25.6" width="84.8" height="12.6" fill="#fff" stroke="#c6c6c6" stroke-width="0.8"/>
<path d="M489.95 31.45 L491.30 32.95 L492.65 31.45" fill="none" stroke="#4a4a4a" stroke-width="0.95" stroke-linecap="round" stroke-linejoin="round"/>
<text x="416.4" y="55" font-size="11.6" fill="#444" text-anchor="middle">$</text>
<path d="M426.15 50.65 L427.50 52.15 L428.85 50.65" fill="none" stroke="#4a4a4a" stroke-width="0.95" stroke-linecap="round" stroke-linejoin="round"/>
<text x="440.6" y="55.2" font-size="11.4" fill="#444" text-anchor="middle" textLength="9.6" lengthAdjust="spacingAndGlyphs">%</text>
<text x="455.4" y="61.6" font-size="21" font-weight="700" font-family="Liberation Serif, serif" fill="#333" text-anchor="middle">’</text>
<path d="M473.4 47.8 L469.4 47.8 M470.8 46.4 L469.3 47.8 L470.8 49.2" fill="none" stroke="#2f7fd2" stroke-width="0.95"/>
<text x="474.6" y="50.4" font-size="6.5" fill="#444">0</text>
<text x="470.4" y="56" font-size="6.5" fill="#444">.00</text>
<path d="M484.2 53.6 L488.4 53.6 M487 52.2 L488.5 53.6 L487 55" fill="none" stroke="#2f7fd2" stroke-width="0.95"/>
<text x="486.4" y="50.4" font-size="6.5" fill="#444">.00</text>
<text x="489.9" y="56" font-size="6.5" fill="#444">0</text>
<rect x="519" y="24.3" width="17" height="12.900000000000002" fill="#fbfbfb"/>
<rect x="519" y="24.3" width="9.9875" height="12.900000000000002" fill="#ee6872"/>
<rect x="519" y="29.137500000000003" width="9.9875" height="3.2250000000000005" fill="#4a8fd8"/>
<rect x="526.225" y="29.137500000000003" width="5.1" height="3.2250000000000005" fill="#fff"/>
<rect x="519" y="24.3" width="17" height="12.900000000000002" fill="none" stroke="#6a6a6a" stroke-width="0.9"/>
<path d="M523.25 24.3 L523.25 37.2" stroke="#8a8a8a" stroke-width="0.6" opacity="0.8"/>
<path d="M519 27.53 L536 27.53" stroke="#8a8a8a" stroke-width="0.6" opacity="0.8"/>
<path d="M527.50 24.3 L527.50 37.2" stroke="#8a8a8a" stroke-width="0.6" opacity="0.8"/>
<path d="M519 30.75 L536 30.75" stroke="#8a8a8a" stroke-width="0.6" opacity="0.8"/>
<path d="M531.75 24.3 L531.75 37.2" stroke="#8a8a8a" stroke-width="0.6" opacity="0.8"/>
<path d="M519 33.98 L536 33.98" stroke="#8a8a8a" stroke-width="0.6" opacity="0.8"/>
<path d="M544.65 56.65 L546.00 58.15 L547.35 56.65" fill="none" stroke="#4a4a4a" stroke-width="0.95" stroke-linecap="round" stroke-linejoin="round"/>
<rect x="559.3" y="24.3" width="17.300000000000068" height="12.900000000000002" fill="#fbfbfb"/>
<rect x="567.95" y="27.525000000000002" width="8.650000000000034" height="9.675" fill="#4a9fe6"/>
<rect x="559.3" y="24.3" width="17.300000000000068" height="12.900000000000002" fill="none" stroke="#6a6a6a" stroke-width="0.9"/>
<path d="M563.62 24.3 L563.62 37.2" stroke="#8a8a8a" stroke-width="0.6" opacity="0.8"/>
<path d="M559.3 27.53 L576.6 27.53" stroke="#8a8a8a" stroke-width="0.6" opacity="0.8"/>
<path d="M567.95 24.3 L567.95 37.2" stroke="#8a8a8a" stroke-width="0.6" opacity="0.8"/>
<path d="M559.3 30.75 L576.6 30.75" stroke="#8a8a8a" stroke-width="0.6" opacity="0.8"/>
<path d="M572.27 24.3 L572.27 37.2" stroke="#8a8a8a" stroke-width="0.6" opacity="0.8"/>
<path d="M559.3 33.98 L576.6 33.98" stroke="#8a8a8a" stroke-width="0.6" opacity="0.8"/>
<path d="M577.6 28.4 L571.0 35.6" stroke="#fafafa" stroke-width="3.2" stroke-linecap="round"/>
<path d="M577.6 28.4 L571.0 35.6" stroke="#5e5e5e" stroke-width="2.4" stroke-linecap="round"/>
<path d="M577.6 28.4 L571.0 35.6" stroke="#f6f6f6" stroke-width="1.1" stroke-linecap="round"/>
<path d="M572.0 33.8 L574.0 36.0 Q572.2 41.0 564.8000000000001 40.0 Q568.0 38.8 568.2 36.0 Q569.0 33.199999999999996 572.0 33.8 Z" fill="#3a92e0" stroke="#f3f3f3" stroke-width="0.5"/>
<path d="M575.35 56.65 L576.70 58.15 L578.05 56.65" fill="none" stroke="#4a4a4a" stroke-width="0.95" stroke-linecap="round" stroke-linejoin="round"/>
<rect x="591.2" y="24.3" width="16.59999999999991" height="12.900000000000002" fill="#fbfbfb" stroke="#6a6a6a" stroke-width="0.9"/>
<path d="M591.2 26.7 L607.8 26.7 M591.2 34.0 L607.8 34.0 M593.8000000000001 24.3 L593.8000000000001 37.2 M605.1999999999999 24.3 L605.1999999999999 37.2" stroke="#8a8a8a" stroke-width="0.6"/>
<rect x="593.8000000000001" y="26.7" width="11.39999999999991" height="7.3000000000000025" fill="#4a9fe6"/>
<path d="M609.2 28.4 L602.6 35.6" stroke="#fafafa" stroke-width="3.2" stroke-linecap="round"/>
<path d="M609.2 28.4 L602.6 35.6" stroke="#5e5e5e" stroke-width="2.4" stroke-linecap="round"/>
<path d="M609.2 28.4 L602.6 35.6" stroke="#f6f6f6" stroke-width="1.1" stroke-linecap="round"/>
<path d="M603.6 33.8 L605.6 36.0 Q603.8000000000001 41.0 596.4000000000001 40.0 Q599.6 38.8 599.8000000000001 36.0 Q600.6 33.199999999999996 603.6 33.8 Z" fill="#3a92e0" stroke="#f3f3f3" stroke-width="0.5"/>
<path d="M607.35 56.65 L608.70 58.15 L610.05 56.65" fill="none" stroke="#4a4a4a" stroke-width="0.95" stroke-linecap="round" stroke-linejoin="round"/>
<rect x="627.3" y="24.6" width="17.70" height="12.50" rx="0.8" fill="#fdfdfd" stroke="#5c5c5c" stroke-width="1.1"/>
<path d="M633.20 24.6 L633.20 37.1" stroke="#707070" stroke-width="0.85"/>
<path d="M627.3 28.77 L645 28.77" stroke="#707070" stroke-width="0.85"/>
<path d="M639.10 24.6 L639.10 37.1" stroke="#707070" stroke-width="0.85"/>
<path d="M627.3 32.93 L645 32.93" stroke="#707070" stroke-width="0.85"/>
<path d="M625.8 30.85 L628.6 28.2 L645.6 28.2 L645.6 33.5 L628.6 33.5 Z" fill="#4a9fe6"/>
<path d="M629.2 29.4 L627.6 30.85 L629.2 32.3 M627.8 30.85 L633 30.85" fill="none" stroke="#eaf3fc" stroke-width="0.7"/>
<path d="M633.2 28.2 L633.2 33.5 M639.1 28.2 L639.1 33.5" stroke="#d6e8fa" stroke-width="0.6"/>
<path d="M634.25 56.25 L635.60 57.75 L636.95 56.25" fill="none" stroke="#4a4a4a" stroke-width="0.95" stroke-linecap="round" stroke-linejoin="round"/>
<rect x="652.7" y="24.6" width="17.30" height="12.50" rx="0.8" fill="#fdfdfd" stroke="#5c5c5c" stroke-width="1.1"/>
<path d="M658.47 24.6 L658.47 37.1" stroke="#707070" stroke-width="0.85"/>
<path d="M652.7 28.77 L670 28.77" stroke="#707070" stroke-width="0.85"/>
<path d="M664.23 24.6 L664.23 37.1" stroke="#707070" stroke-width="0.85"/>
<path d="M652.7 32.93 L670 32.93" stroke="#707070" stroke-width="0.85"/>
<rect x="652.2" y="28.4" width="11" height="5" fill="#fbfbfb"/>
<rect x="654.6" y="28.6" width="8.4" height="4.6" fill="#4a9fe6"/>
<rect x="663" y="27.6" width="8.4" height="6.6" fill="#f6f6f6"/>
<path d="M664.4 28 L670.6 34 M670.6 28 L664.4 34" stroke="#e03a3a" stroke-width="0.95"/>
<path d="M658.6 28.6 L658.6 33.2" stroke="#d6e8fa" stroke-width="0.6"/>
<path d="M659.95 56.25 L661.30 57.75 L662.65 56.25" fill="none" stroke="#4a4a4a" stroke-width="0.95" stroke-linecap="round" stroke-linejoin="round"/>
<rect x="678.8" y="24.6" width="17.00" height="12.50" rx="0.8" fill="#fdfdfd" stroke="#5c5c5c" stroke-width="1.1"/>
<path d="M684.47 24.6 L684.47 37.1" stroke="#707070" stroke-width="0.85"/>
<path d="M678.8 28.77 L695.8 28.77" stroke="#707070" stroke-width="0.85"/>
<path d="M690.13 24.6 L690.13 37.1" stroke="#707070" stroke-width="0.85"/>
<path d="M678.8 32.93 L695.8 32.93" stroke="#707070" stroke-width="0.85"/>
<rect x="684.47" y="28.77" width="5.67" height="4.17" fill="#4a9fe6"/>
<rect x="681.87" y="28.47" width="10.87" height="4.77" fill="#5aa9ea"/>
<rect x="684.47" y="28.47" width="5.67" height="4.77" fill="#3f93e0"/>
<path d="M681.90 22.40 L692.30 22.40" stroke="#4a9fe6" stroke-width="1"/>
<path d="M685.45 56.25 L686.80 57.75 L688.15 56.25" fill="none" stroke="#4a4a4a" stroke-width="0.95" stroke-linecap="round" stroke-linejoin="round"/>
<text x="712.4" y="30.6" font-size="12" fill="#444" textLength="8.6" lengthAdjust="spacingAndGlyphs">Σ</text>
<path d="M760.65 26.25 L762.00 27.75 L763.35 26.25" fill="none" stroke="#4a4a4a" stroke-width="0.95" stroke-linecap="round" stroke-linejoin="round"/>
<rect x="712.6" y="36" width="9" height="8.2" fill="#fbfbfb" stroke="#5a5a5a" stroke-width="0.95"/><path d="M712.6 37.6 L721.6 37.6" stroke="#5a5a5a" stroke-width="0.9"/>
<path d="M717.1 38.6 L717.1 42.4 M715.6 41 L717.1 42.5 L718.6 41" fill="none" stroke="#2f7fd2" stroke-width="0.9"/>
<path d="M735.35 40.05 L736.70 41.55 L738.05 40.05" fill="none" stroke="#4a4a4a" stroke-width="0.95" stroke-linecap="round" stroke-linejoin="round"/>
<path d="M712.4 55.6 L717.8 50.2 L721.6 52.8 L716.4 58.6 Z" fill="#faf4fb" stroke="#a64db3" stroke-width="0.95" stroke-linejoin="round"/><path d="M714.6 53.4 L718.4 56.4" stroke="#a64db3" stroke-width="0.8"/>
<path d="M742.45 54.25 L743.80 55.75 L745.15 54.25" fill="none" stroke="#4a4a4a" stroke-width="0.95" stroke-linecap="round" stroke-linejoin="round"/>
<text x="771.4" y="30.4" font-size="9.6" fill="#2f7fd2">A</text>
<text x="771.6" y="38.8" font-size="9.6" fill="#444">Z</text>
<path d="M779.6 26.8 L789.4 26.8 L785.6 31.6 L785.6 36 L783.4 36 L783.4 31.6 Z" fill="#f8f8f8" stroke="#5a5a5a" stroke-width="0.9" stroke-linejoin="round"/>
<path d="M788.25 56.65 L789.60 58.15 L790.95 56.65" fill="none" stroke="#4a4a4a" stroke-width="0.95" stroke-linecap="round" stroke-linejoin="round"/>
<path d="M795.6 39 L798.2 36.6 L800.5 39" fill="none" stroke="#555" stroke-width="0.9"/>
<rect x="797.7" y="4.8" width="4" height="10.4" rx="0.8" fill="#fff" stroke="#e0e0e0" stroke-width="0.5"/>
<path d="M50.3 89 L54.7 89 L52.5 91.5 Z" fill="#4a4a4a"/>
<circle cx="68" cy="88.2" r="0.55" fill="#a8a8a8"/>
<circle cx="68" cy="90.8" r="0.55" fill="#a8a8a8"/>
<circle cx="68" cy="93.4" r="0.55" fill="#a8a8a8"/>
<path d="M86.2 88.2 L91.4 93.6 M91.4 88.2 L86.2 93.6" stroke="#a0a0a0" stroke-width="0.8"/>
<path d="M107.4 91.4 L109.6 93.6 L113.8 88.2" fill="none" stroke="#a0a0a0" stroke-width="0.8"/>
<text x="130.4" y="93.6" font-size="8.4" font-style="italic" font-family="Liberation Serif, serif" fill="#555">f</text>
<text x="133.6" y="94.4" font-size="5.2" font-style="italic" font-family="Liberation Serif, serif" fill="#555">x</text>
</svg>

<span class="t" id="fx" style="left:153px;top:85.7px;font-size:8.4px;color:#3a3a3a;transform-origin:0 50%;transform:scaleX(0.92)">=YEAR(TODAY()) - YEAR(B2) - (DATE(YEAR(TODAY()), MONTH(B2), DAY(B2)) &gt; TODAY())</span>
<span class="t" style="left:3.63px;top:2.80px;font-size:8.2px;color:#3c3c3c;font-weight:400;letter-spacing:-0.371px;-webkit-text-stroke:0.12px;">File</span><span class="t" style="left:34.83px;top:2.80px;font-size:8.2px;color:#333;font-weight:700;letter-spacing:0.167px;-webkit-text-stroke:0.12px;">Home</span><span class="t" style="left:74.43px;top:2.80px;font-size:8.2px;color:#3c3c3c;font-weight:400;letter-spacing:-0.111px;-webkit-text-stroke:0.12px;">Insert</span><span class="t" style="left:112.53px;top:2.80px;font-size:8.2px;color:#3c3c3c;font-weight:400;letter-spacing:-0.197px;-webkit-text-stroke:0.12px;">Page Layout</span><span class="t" style="left:174.33px;top:2.80px;font-size:8.2px;color:#3c3c3c;font-weight:400;letter-spacing:-0.213px;-webkit-text-stroke:0.12px;">Formulas</span><span class="t" style="left:223.93px;top:2.80px;font-size:8.2px;color:#3c3c3c;font-weight:400;letter-spacing:-0.120px;-webkit-text-stroke:0.12px;">Data</span><span class="t" style="left:257.83px;top:2.80px;font-size:8.2px;color:#3c3c3c;font-weight:400;letter-spacing:-0.223px;-webkit-text-stroke:0.12px;">Review</span><span class="t" style="left:298.93px;top:2.80px;font-size:8.2px;color:#3c3c3c;font-weight:400;letter-spacing:-0.048px;-webkit-text-stroke:0.12px;">View</span><span class="t" style="left:332.53px;top:2.80px;font-size:8.2px;color:#3c3c3c;font-weight:400;letter-spacing:-0.006px;-webkit-text-stroke:0.12px;">Help</span><span class="t" style="left:366.43px;top:2.80px;font-size:8.2px;color:#3c3c3c;font-weight:400;letter-spacing:0.100px;-webkit-text-stroke:0.12px;">Acrobat</span><span class="t" style="left:412.43px;top:2.80px;font-size:8.2px;color:#217346;font-weight:400;letter-spacing:-0.152px;-webkit-text-stroke:0.12px;">Table Design</span><span class="t" style="left:2.63px;top:42.10px;font-size:8.2px;color:#3c3c3c;font-weight:400;letter-spacing:-0.644px;-webkit-text-stroke:0.12px;">Paste</span><span class="t" style="left:37.23px;top:21.90px;font-size:8.2px;color:#3c3c3c;font-weight:400;letter-spacing:-0.211px;-webkit-text-stroke:0.12px;">Cut</span><span class="t" style="left:37.23px;top:36.50px;font-size:8.2px;color:#3c3c3c;font-weight:400;letter-spacing:-0.377px;-webkit-text-stroke:0.12px;">Copy</span><span class="t" style="left:37.23px;top:50.90px;font-size:8.2px;color:#3c3c3c;font-weight:400;letter-spacing:-0.431px;-webkit-text-stroke:0.12px;">Format Painter</span><span class="t" style="left:22.33px;top:65.90px;font-size:8.2px;color:#3c3c3c;font-weight:400;letter-spacing:-0.336px;-webkit-text-stroke:0.12px;">Clipboard</span><span class="t" style="left:100.63px;top:26.90px;font-size:8.2px;color:#333;font-weight:400;letter-spacing:-0.134px;-webkit-text-stroke:0.12px;">Arial</span><span class="t" style="left:177.43px;top:26.90px;font-size:8.2px;color:#333;font-weight:400;letter-spacing:-0.791px;-webkit-text-stroke:0.12px;">11</span><span class="t" style="left:151.43px;top:65.90px;font-size:8.2px;color:#3c3c3c;font-weight:400;letter-spacing:-0.268px;-webkit-text-stroke:0.12px;">Font</span><span class="t" style="left:334.73px;top:26.30px;font-size:8.2px;color:#3c3c3c;font-weight:400;letter-spacing:-0.483px;-webkit-text-stroke:0.12px;">Wrap Text</span><span class="t" style="left:334.73px;top:45.50px;font-size:8.2px;color:#a6a6a6;font-weight:400;letter-spacing:-0.384px;-webkit-text-stroke:0.12px;">Merge &amp; Center</span><span class="t" style="left:299.23px;top:65.90px;font-size:8.2px;color:#3c3c3c;font-weight:400;letter-spacing:-0.500px;-webkit-text-stroke:0.12px;">Alignment</span><span class="t" style="left:411.73px;top:26.90px;font-size:8.2px;color:#333;font-weight:400;letter-spacing:-0.234px;-webkit-text-stroke:0.12px;">Number</span><span class="t" style="left:434.73px;top:65.90px;font-size:8.2px;color:#3c3c3c;font-weight:400;letter-spacing:-0.584px;-webkit-text-stroke:0.12px;">Number</span><span class="t" style="left:508.43px;top:42.10px;font-size:8.2px;color:#3c3c3c;font-weight:400;letter-spacing:-0.250px;-webkit-text-stroke:0.12px;">Conditional</span><span class="t" style="left:505.83px;top:51.90px;font-size:8.2px;color:#3c3c3c;font-weight:400;letter-spacing:-0.412px;-webkit-text-stroke:0.12px;">Formatting</span><span class="t" style="left:551.13px;top:42.10px;font-size:8.2px;color:#3c3c3c;font-weight:400;letter-spacing:-0.493px;-webkit-text-stroke:0.12px;">Format as</span><span class="t" style="left:556.33px;top:51.90px;font-size:8.2px;color:#3c3c3c;font-weight:400;letter-spacing:-0.612px;-webkit-text-stroke:0.12px;">Table</span><span class="t" style="left:593.43px;top:42.10px;font-size:8.2px;color:#3c3c3c;font-weight:400;letter-spacing:-0.598px;-webkit-text-stroke:0.12px;">Cell</span><span class="t" style="left:586.23px;top:51.90px;font-size:8.2px;color:#3c3c3c;font-weight:400;letter-spacing:-0.613px;-webkit-text-stroke:0.12px;">Styles</span><span class="t" style="left:550.43px;top:65.90px;font-size:8.2px;color:#3c3c3c;font-weight:400;letter-spacing:-0.313px;-webkit-text-stroke:0.12px;">Styles</span><span class="t" style="left:626.03px;top:42.10px;font-size:8.2px;color:#3c3c3c;font-weight:400;letter-spacing:-0.328px;-webkit-text-stroke:0.12px;">Insert</span><span class="t" style="left:650.83px;top:42.10px;font-size:8.2px;color:#3c3c3c;font-weight:400;letter-spacing:-0.492px;-webkit-text-stroke:0.12px;">Delete</span><span class="t" style="left:675.13px;top:42.10px;font-size:8.2px;color:#3c3c3c;font-weight:400;letter-spacing:-0.353px;-webkit-text-stroke:0.12px;">Format</span><span class="t" style="left:654.23px;top:65.90px;font-size:8.2px;color:#3c3c3c;font-weight:400;letter-spacing:-0.757px;-webkit-text-stroke:0.12px;">Cells</span><span class="t" style="left:722.93px;top:21.60px;font-size:8.2px;color:#3c3c3c;font-weight:400;letter-spacing:-0.324px;-webkit-text-stroke:0.12px;">AutoSum</span><span class="t" style="left:722.93px;top:35.40px;font-size:8.2px;color:#3c3c3c;font-weight:400;letter-spacing:-0.063px;-webkit-text-stroke:0.12px;">Fill</span><span class="t" style="left:722.93px;top:49.70px;font-size:8.2px;color:#3c3c3c;font-weight:400;letter-spacing:-0.432px;-webkit-text-stroke:0.12px;">Clear</span><span class="t" style="left:769.73px;top:42.40px;font-size:8.2px;color:#3c3c3c;font-weight:400;letter-spacing:-0.225px;-webkit-text-stroke:0.12px;">Sort &amp;</span><span class="t" style="left:768.43px;top:51.90px;font-size:8.2px;color:#3c3c3c;font-weight:400;letter-spacing:-0.297px;-webkit-text-stroke:0.12px;">Filter</span><span class="t" style="left:796.23px;top:42.40px;font-size:8.2px;color:#3c3c3c;font-weight:400;-webkit-text-stroke:0.12px;">Find</span><span class="t" style="left:794.03px;top:51.90px;font-size:8.2px;color:#3c3c3c;font-weight:400;-webkit-text-stroke:0.12px;">Select</span><span class="t" style="left:754.33px;top:65.90px;font-size:8.2px;color:#3c3c3c;font-weight:400;letter-spacing:-0.333px;-webkit-text-stroke:0.12px;">Editing</span><span class="t" style="left:0.93px;top:84.90px;font-size:8.2px;color:#333;font-weight:400;letter-spacing:-0.575px;-webkit-text-stroke:0.12px;">C2</span>

<svg class="abs" style="left:0;top:0" width="800" height="471" viewBox="0 0 800 471" font-family="Liberation Sans, sans-serif">
<defs><filter id="sh" x="-10%" y="-30%" width="120%" height="170%"><feGaussianBlur stdDeviation="1.6"/></filter><filter id="sh2" x="-5%" y="-30%" width="110%" height="160%"><feGaussianBlur stdDeviation="1.2"/></filter></defs>
<rect x="145.95" y="77.25" width="336.4" height="28.5" fill="none" stroke="#000" stroke-opacity="0.42" stroke-width="4.2" filter="url(#sh2)" transform="translate(1.3 2)"/>
<rect x="145.95" y="77.25" width="336.4" height="28.5" fill="none" stroke="#e2131a" stroke-width="3.7"/>
<path d="M492 89.2 L512.1 75.9 L511 81.4 L560 72.4 L585 68.1 L610 63.75 L635 59.4 L652 56.8 L635 61.25 Q622 64.4 610 67.5 Q597 70.6 585 73.1 L560 78.4 L512.6 88.4 L515.8 94.5 Z" fill="#000" opacity="0.45" stroke="#000" stroke-width="4.5" stroke-linejoin="round" filter="url(#sh)" transform="translate(2 2.6)"/>
<path d="M492 89.2 L512.1 75.9 L511 81.4 L560 72.4 L585 68.1 L610 63.75 L635 59.4 L652 56.8 L635 61.25 Q622 64.4 610 67.5 Q597 70.6 585 73.1 L560 78.4 L512.6 88.4 L515.8 94.5 Z" fill="#fff" stroke="#fff" stroke-width="5.4" stroke-linejoin="round"/>
<path d="M492 89.2 L512.1 75.9 L511 81.4 L560 72.4 L585 68.1 L610 63.75 L635 59.4 L652 56.8 L635 61.25 Q622 64.4 610 67.5 Q597 70.6 585 73.1 L560 78.4 L512.6 88.4 L515.8 94.5 Z" fill="#e8131b"/>
<path d="M651.80 431.9 L666.20 431.9 Q664.80 444.65 661.90 454.20 Q661.00 457.4 657.80 457.4 L642.80 457.4 Q646.90 444.65 647.70 435.10 Q648.60 431.9 651.80 431.9 Z" fill="#1b62b3"/>
<path d="M672.80 423.9 L688.60 423.9 Q686.10 443.80 682.10 460.50 Q681.20 463.7 678.00 463.7 L661.90 463.7 Q666.95 443.80 668.70 427.10 Q669.60 423.9 672.80 423.9 Z" fill="#f37320"/>
<path d="M693.40 431.4 L708.30 431.4 Q706.65 444.60 703.50 454.60 Q702.60 457.8 699.40 457.8 L684.20 457.8 Q688.40 444.60 689.30 434.60 Q690.20 431.4 693.40 431.4 Z" fill="#40ae49"/>
<text x="646.4" y="452.9" font-size="20.6" font-weight="700" font-style="italic" fill="#fff" stroke="#fff" stroke-width="0.5" textLength="15.4" lengthAdjust="spacingAndGlyphs">F</text>
<text x="665.6" y="452.9" font-size="20.6" font-weight="700" font-style="italic" fill="#fff" stroke="#fff" stroke-width="0.5" textLength="18" lengthAdjust="spacingAndGlyphs">P</text>
<text x="687.6" y="452.9" font-size="20.6" font-weight="700" font-style="italic" fill="#fff" stroke="#fff" stroke-width="0.5" textLength="15.6" lengthAdjust="spacingAndGlyphs">T</text>
<circle cx="707.7" cy="455.2" r="2.4" fill="#5f8fd6"/>
<text x="714.4" y="450.9" font-size="18" font-weight="700" fill="#111" stroke="#111" stroke-width="0.35" textLength="43" lengthAdjust="spacingAndGlyphs">Shop</text>
<text x="757.4" y="450.9" font-size="9.4" font-weight="700" fill="#111" stroke="#111" stroke-width="0.15" textLength="35.4" lengthAdjust="spacingAndGlyphs">.com.vn</text>
</svg>
</div></body></html>
